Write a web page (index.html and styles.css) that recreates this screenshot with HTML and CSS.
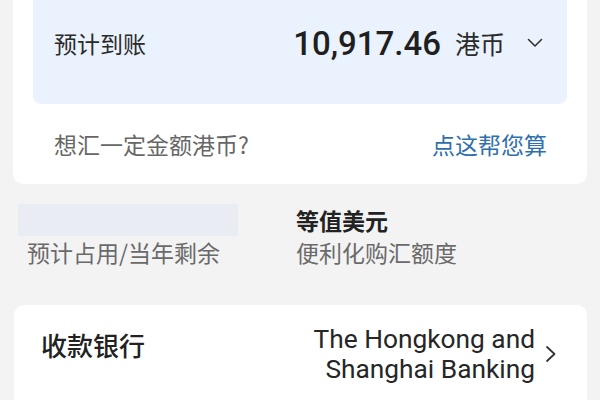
FILE: index.html
```html
<!DOCTYPE html>
<html lang="zh-CN">
<head>
<meta charset="utf-8">
<link rel="stylesheet" href="styles.css">
</head>
<body>
<div class="page">
  <section class="card top-card">
    <div class="receive-box">
      <span class="label">预计到账</span>
      <div class="amount-wrap">
        <span class="amount">10,917.46</span>
        <span class="currency">港币</span>
        <svg class="chev-down" width="16" height="10" viewBox="0 0 16 10"><path d="M1.5 1.5 L8 8 L14.5 1.5" fill="none" stroke="#333" stroke-width="1.6" stroke-linecap="round" stroke-linejoin="round"/></svg>
      </div>
    </div>
    <div class="hint-row">
      <span class="hint">想汇一定金额港币?</span>
      <span class="link">点这帮您算</span>
    </div>
  </section>

  <section class="quota">
    <div class="quota-col left">
      <div class="placeholder"></div>
      <div class="sub">预计占用/当年剩余</div>
    </div>
    <div class="quota-col right">
      <div class="title">等值美元</div>
      <div class="sub">便利化购汇额度</div>
    </div>
  </section>

  <section class="card bank-card">
    <div class="bank-row">
      <span class="bank-label">收款银行</span>
      <div class="bank-value">
        <span class="bank-name">The Hongkong and<br>Shanghai Banking</span>
        <svg class="chev-right" width="12" height="18" viewBox="0 0 12 18"><path d="M2 2 L9.5 9 L2 16" fill="none" stroke="#333" stroke-width="1.8" stroke-linecap="round" stroke-linejoin="round"/></svg>
      </div>
    </div>
  </section>
</div>
</body>
</html>
```

FILE: styles.css
```css
html, body {
  margin: 0;
  padding: 0;
}
body {
  background: #f3f3f3;
  font-family: "Noto Sans CJK SC", "Noto Sans", sans-serif;
  color: #222;
  width: 600px;
  height: 400px;
  overflow: hidden;
}
.page {
  padding: 0 13px;
}
.card {
  background: #fff;
  border-radius: 10px;
}
.top-card {
  margin-top: -38px;
  padding: 20px 20px 0 20px;
}
.receive-box {
  height: 122px;
  background: #eaf2fd;
  border-radius: 8px;
  display: flex;
  align-items: center;
  justify-content: space-between;
  padding: 0 24px 0 21px;
}
.label {
  font-size: 23px;
  color: #2a2a2a;
}
.amount-wrap {
  display: flex;
  align-items: center;
}
.amount {
  font-family: Roboto, "Noto Sans", sans-serif;
  font-weight: 500;
  font-size: 33px;
  color: #1f1f1f;
}
.currency {
  font-size: 25px;
  color: #2a2a2a;
  margin-left: 14px;
}
.chev-down {
  margin-left: 22px;
}
.hint-row {
  height: 80px;
  display: flex;
  align-items: center;
  justify-content: space-between;
  padding: 0 20px 0 21px;
}
.hint {
  font-size: 23px;
  color: #676767;
}
.link {
  font-size: 23px;
  color: #2f6fae;
}
.quota {
  margin-top: 20px;
  display: grid;
  grid-template-columns: 283px 1fr;
  height: 101px;
}
.quota-col.left {
  padding-left: 5px;
}
.placeholder {
  width: 220px;
  height: 32px;
  background: #e9edf3;
}
.quota-col.left .sub {
  padding-left: 9px;
}
.title {
  height: 32px;
  line-height: 32px;
  font-size: 23px;
  font-weight: 700;
  color: #222;
}
.sub {
  margin-top: 1px;
  line-height: 30px;
  font-size: 23px;
  color: #6a6a6a;
}
.bank-card {
  margin-left: 1px;
  height: 110px;
}
.bank-row {
  display: flex;
  justify-content: space-between;
  align-items: flex-start;
  padding: 19px 30px 0 27px;
}
.bank-label {
  font-size: 26px;
  line-height: 41px;
  font-weight: 500;
  color: #222;
}
.bank-value {
  display: flex;
  align-items: center;
}
.bank-name {
  font-family: Roboto, "Noto Sans", sans-serif;
  font-size: 26.3px;
  line-height: 30px;
  text-align: right;
  color: #262626;
}
.chev-right {
  margin-left: 10px;
}
```
